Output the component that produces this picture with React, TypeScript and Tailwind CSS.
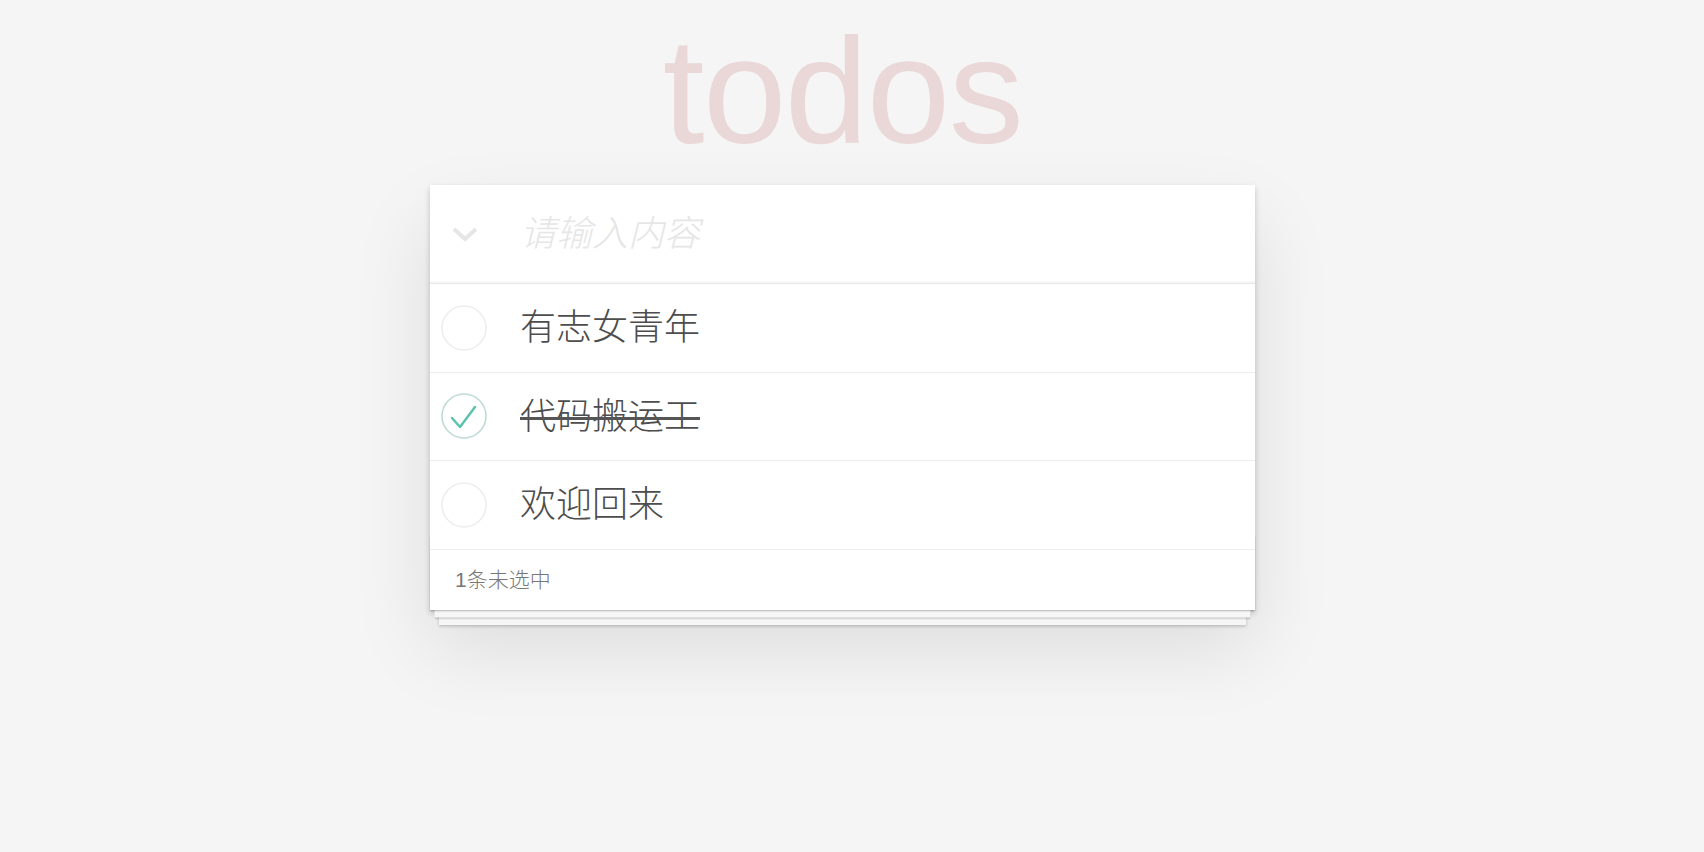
import React from 'react';

const todos = [
  { id: 1, title: '有志女青年', done: false },
  { id: 2, title: '代码搬运工', done: true },
  { id: 3, title: '欢迎回来', done: false },
];

const font = "font-['Helvetica_Neue','Liberation_Sans',Arial,'Noto_Sans_CJK_SC',sans-serif]";

const CheckCircle = ({ done }: { done: boolean }) => (
  <svg width="46" height="46" viewBox="0 0 46 46" className="shrink-0">
    <circle cx="23" cy="23" r="22" fill="none" stroke={done ? '#bddad5' : '#ededed'} strokeWidth="1.5" />
    {done && (
      <polyline
        points="11,25 19,34 34,14"
        fill="none"
        stroke="#5dc2af"
        strokeWidth="2.5"
        strokeLinecap="round"
        strokeLinejoin="round"
      />
    )}
  </svg>
);

const App = () => {
  return (
    <div className={`min-h-screen bg-[#f5f5f5] pt-[16px] pr-[19px] ${font} font-light text-[#4d4d4d]`}>
      <h1 className="text-center text-[150px] leading-none font-thin text-[#ead7d7] h-[150px] tracking-[-1.5px]">todos</h1>

      <section className="relative mx-auto mt-[19px] w-[825px] bg-white shadow-[0_3px_6px_0_rgba(0,0,0,0.2),0_37px_75px_0_rgba(0,0,0,0.1)]">
        {/* Header input */}
        <div className="flex h-[98px] items-center shadow-[inset_0_-2px_1px_rgba(0,0,0,0.03)]">
          <div className="flex w-[90px] shrink-0 pl-[22px]">
            <svg width="26" height="15" viewBox="0 0 26 15">
              <polyline points="2,2 13,12 24,2" fill="none" stroke="#e6e6e6" strokeWidth="4" strokeLinejoin="miter" />
            </svg>
          </div>
          <input
            className="h-full flex-1 bg-transparent pr-[24px] text-[36px] outline-none placeholder:italic placeholder:text-[#e6e6e6]"
            placeholder="请输入内容"
          />
        </div>

        {/* List */}
        <ul className="border-t-[1.5px] border-[#e6e6e6]">
          {todos.map(todo => (
            <li key={todo.id} className="flex h-[88.5px] items-center border-b-[1.5px] border-[#ededed]">
              <div className="flex w-[90px] shrink-0 items-center pl-[11px]">
                <CheckCircle done={todo.done} />
              </div>
              <label
                className={`text-[36px] leading-[1.2] text-[#4d4d4d] ${
                  todo.done ? 'line-through decoration-[#555] decoration-[3px]' : ''
                }`}
              >
                {todo.title}
              </label>
            </li>
          ))}
        </ul>

        {/* Footer */}
        <footer className="relative flex h-[60px] items-center px-[25px] text-[21px] text-[#777]">
          <div className="pointer-events-none absolute inset-x-0 bottom-0 h-[75px] shadow-[0_1.5px_1.5px_rgba(0,0,0,0.2),0_12px_0_-4.5px_#f6f6f6,0_13.5px_1.5px_-4.5px_rgba(0,0,0,0.2),0_24px_0_-9px_#f6f6f6,0_25.5px_3px_-9px_rgba(0,0,0,0.2)]" />
          <span className="relative">1条未选中</span>
        </footer>
      </section>
    </div>
  );
};

export default App;
